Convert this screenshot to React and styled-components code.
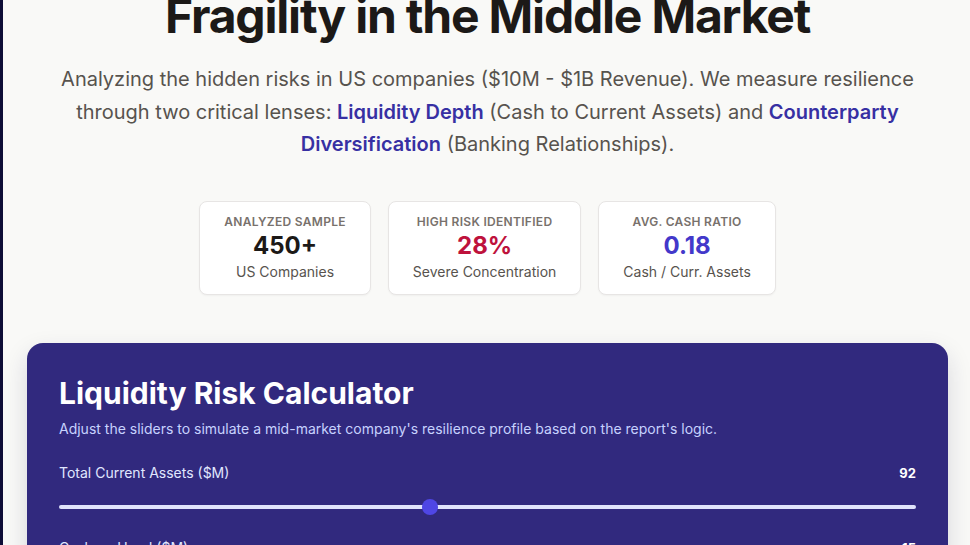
import React from "react";
import styled, { createGlobalStyle } from "styled-components";

const Global = createGlobalStyle`
  html, body { margin: 0; padding: 0; overflow: hidden; background: #f9f9f7; }
  body { font-family: Inter, "Noto Sans", sans-serif; }
  #root { border-left: 3px solid #0e0d36; min-height: 545px; }
`;

const Page = styled.div`
  width: 969px;
  box-sizing: border-box;
  padding: 0 24px;
  display: flex;
  flex-direction: column;
  align-items: center;
`;

const Title = styled.h1`
  margin: -8px 0 23px;
  font-size: 48px;
  line-height: 1;
  font-weight: 700;
  letter-spacing: -0.025em;
  color: #1c1917;
  text-align: center;
`;

const Lead = styled.p`
  margin: 0 0 40px;
  max-width: 896px;
  font-size: 20px;
  line-height: 1.625;
  color: #57534e;
  text-align: center;
`;

const Em = styled.span`
  color: #3730a3;
  font-weight: 600;
`;

const Stats = styled.div`
  display: flex;
  gap: 17px;
  justify-content: center;
  margin-bottom: 48px;
`;

const Stat = styled.div`
  background: #ffffff;
  border: 1px solid #e7e5e4;
  border-radius: 8px;
  box-shadow: 0 1px 2px rgba(0, 0, 0, 0.04);
  padding: 12px 24px;
  display: flex;
  flex-direction: column;
  align-items: center;
  text-align: center;
`;

const StatLabel = styled.div`
  font-size: 12px;
  line-height: 16px;
  font-weight: 600;
  letter-spacing: 0.025em;
  text-transform: uppercase;
  color: #78716c;
`;

const StatValue = styled.div`
  font-size: 24px;
  line-height: 32px;
  font-weight: 700;
  color: ${(p) => p.$color};
`;

const StatSub = styled.div`
  font-size: 14px;
  line-height: 20px;
  color: #57534e;
`;

const Calc = styled.section`
  align-self: stretch;
  background: #31297e;
  border-radius: 16px;
  box-shadow: 0 10px 25px rgba(30, 27, 75, 0.15);
  padding: 32px 32px 40px;
  color: #ffffff;
`;

const CalcTitle = styled.h2`
  margin: 0 0 8px;
  font-size: 30px;
  line-height: 36px;
  font-weight: 700;
`;

const CalcSub = styled.p`
  margin: 0 0 24px;
  font-size: 14px;
  line-height: 20px;
  color: #c7d2fe;
`;

const Fields = styled.div`
  display: flex;
  flex-direction: column;
  gap: 23px;
`;

const Field = styled.div`
  display: flex;
  flex-direction: column;
  gap: 16px;
`;

const FieldHead = styled.div`
  display: flex;
  justify-content: space-between;
  align-items: center;
  font-size: 14px;
  line-height: 20px;
`;

const FieldLabel = styled.span`
  color: #e0e7ff;
`;

const FieldValue = styled.span`
  font-size: 13px;
  font-weight: 700;
  color: #ffffff;
`;

const Range = styled.input`
  -webkit-appearance: none;
  appearance: none;
  width: 100%;
  height: 16px;
  margin: 0;
  background: transparent;
  &::-webkit-slider-runnable-track {
    height: 4px;
    border-radius: 2px;
    background: #e0e3fb;
  }
  &::-webkit-slider-thumb {
    -webkit-appearance: none;
    width: 16px;
    height: 16px;
    margin-top: -6px;
    border-radius: 50%;
    background: #4f46e5;
    border: none;
  }
`;

const fields = [
  { label: "Total Current Assets ($M)", min: 10, max: 200, value: 92 },
  { label: "Cash on Hand ($M)", min: 0, max: 100, value: 15 },
];

export default function App() {
  return (
    <>
      <Global />
      <Page>
        <Title>Fragility in the Middle Market</Title>
        <Lead>
          Analyzing the hidden risks in US companies ($10M - $1B Revenue). We
          measure resilience through two critical lenses:{" "}
          <Em>Liquidity Depth</Em> (Cash to Current Assets) and{" "}
          <Em>Counterparty Diversification</Em> (Banking Relationships).
        </Lead>
        <Stats>
          <Stat>
            <StatLabel>Analyzed Sample</StatLabel>
            <StatValue $color="#1c1917">450+</StatValue>
            <StatSub>US Companies</StatSub>
          </Stat>
          <Stat>
            <StatLabel>High Risk Identified</StatLabel>
            <StatValue $color="#be123c">28%</StatValue>
            <StatSub>Severe Concentration</StatSub>
          </Stat>
          <Stat>
            <StatLabel>Avg. Cash Ratio</StatLabel>
            <StatValue $color="#4338ca">0.18</StatValue>
            <StatSub>Cash / Curr. Assets</StatSub>
          </Stat>
        </Stats>
        <Calc>
          <CalcTitle>Liquidity Risk Calculator</CalcTitle>
          <CalcSub>
            Adjust the sliders to simulate a mid-market company's resilience
            profile based on the report's logic.
          </CalcSub>
          <Fields>
            {fields.map((f) => (
              <Field key={f.label}>
                <FieldHead>
                  <FieldLabel>{f.label}</FieldLabel>
                  <FieldValue>{f.value}</FieldValue>
                </FieldHead>
                <Range
                  type="range"
                  min={f.min}
                  max={f.max}
                  defaultValue={f.value}
                />
              </Field>
            ))}
          </Fields>
        </Calc>
      </Page>
    </>
  );
}
